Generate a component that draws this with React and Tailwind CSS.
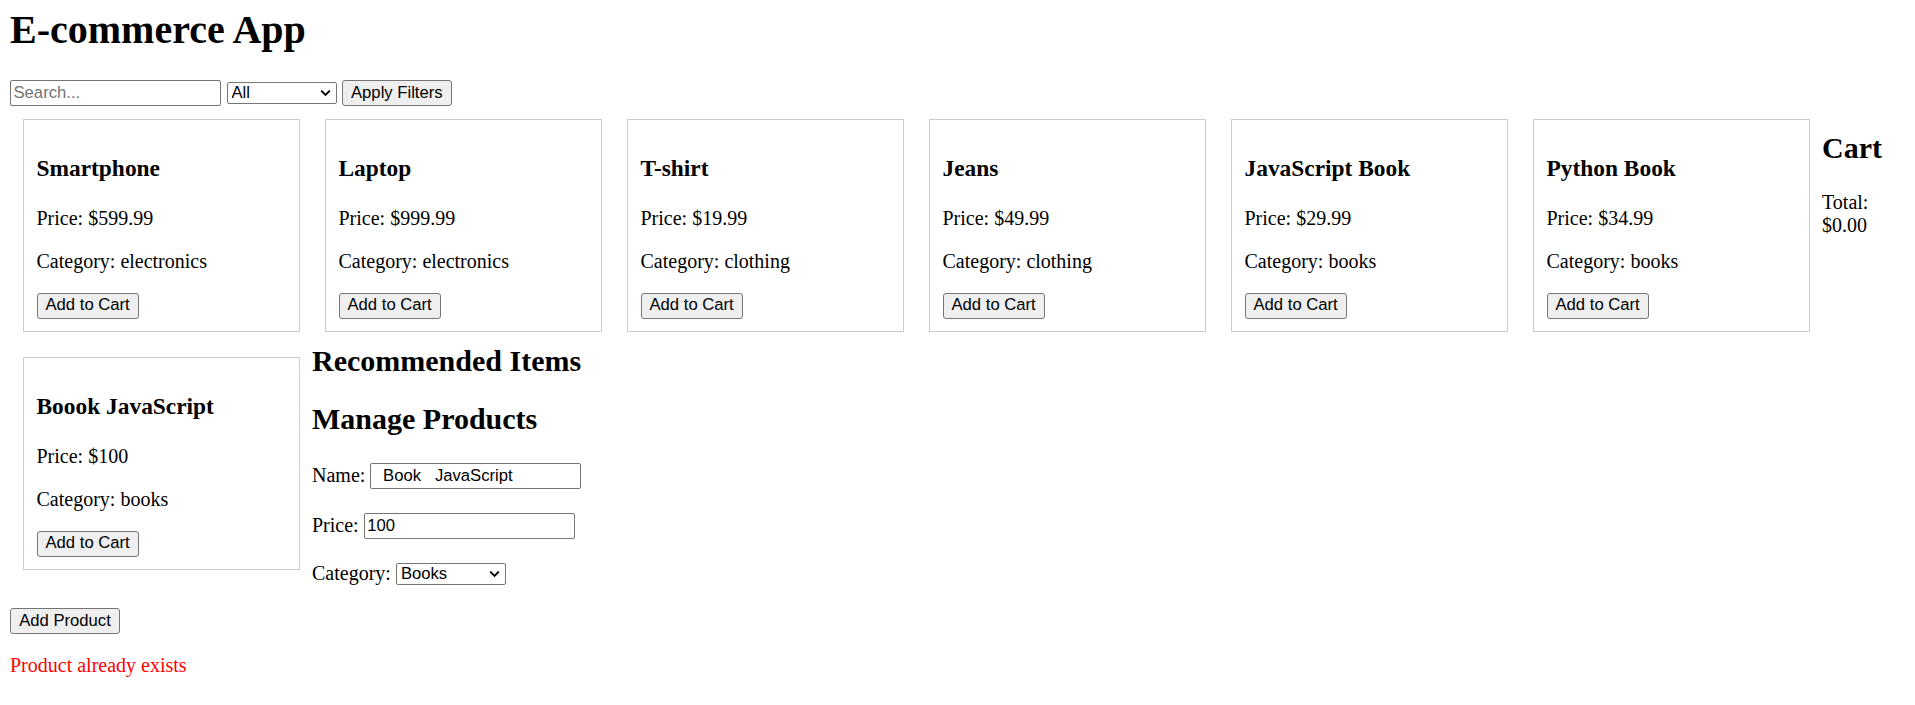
import React, { useState } from 'react';

// Product data shown in the grid
const products = [
  { id: 1, name: 'Smartphone', price: '599.99', category: 'electronics' },
  { id: 2, name: 'Laptop', price: '999.99', category: 'electronics' },
  { id: 3, name: 'T-shirt', price: '19.99', category: 'clothing' },
  { id: 4, name: 'Jeans', price: '49.99', category: 'clothing' },
  { id: 5, name: 'JavaScript Book', price: '29.99', category: 'books' },
  { id: 6, name: 'Python Book', price: '34.99', category: 'books' },
  { id: 7, name: 'Boook JavaScript', price: '100', category: 'books' }
];

const controlFont = "font-['Liberation_Sans',Arial,sans-serif] text-[16.67px] text-black";

const NativeButton = ({ children, className = '' }) => (
  <button
    className={`block h-[26px] px-[8px] border border-[#767676] rounded-[3px] bg-[#efefef] leading-none ${controlFont} ${className}`}
  >
    {children}
  </button>
);

const Chevron = () => (
  <svg
    className="absolute right-[6px] top-1/2 -translate-y-1/2 pointer-events-none"
    width="11"
    height="7"
    viewBox="0 0 11 7"
  >
    <path d="M1.2 1.2 5.5 5.5 9.8 1.2" fill="none" stroke="#000" strokeWidth="1.9" />
  </svg>
);

const SelectBox = ({ value, options }) => (
  <div className="relative shrink-0 w-[110px] h-[22px]">
    <select
      defaultValue={value}
      className={`block appearance-none w-full h-full py-0 pl-[4px] pr-[20px] border border-[#767676] rounded-[2px] bg-white leading-[20px] ${controlFont}`}
    >
      {options.map((o) => (
        <option key={o} value={o}>{o}</option>
      ))}
    </select>
    <Chevron />
  </div>
);

const TextInput = ({ placeholder, defaultValue }) => (
  <input
    type="text"
    placeholder={placeholder}
    defaultValue={defaultValue}
    className={`block w-[211px] h-[26px] px-[2.5px] border border-[#767676] rounded-[2px] bg-white placeholder:text-[#757575] ${controlFont}`}
  />
);

const ProductCard = ({ product }) => (
  <div className="box-border shrink-0 w-[277px] h-[213px] border border-[#cccccc] px-[12.5px] pt-[12.5px] ml-[13px] mr-[12px] mt-[13px] mb-[12px]">
    <h3 className="mt-[22.5px] mb-[24.5px] text-[23.4px] leading-[27px] font-bold">{product.name}</h3>
    <p className="my-[20px] leading-[23px]">Price: ${product.price}</p>
    <p className="my-[20px] leading-[23px]">Category: {product.category}</p>
    <NativeButton className="h-[25.4px]">Add to Cart</NativeButton>
  </div>
);

const App = () => {
  const [error] = useState('Product already exists');

  return (
    <div className="min-h-screen bg-white px-[10px] pt-[7px] text-black text-[20px] font-['Liberation_Serif','Times_New_Roman',serif]">
      <h1 className="text-[40px] leading-[46px] font-bold mb-[27px]">E-commerce App</h1>

      {/* Filters */}
      <div className="flex items-center gap-[5.5px] h-[26px]">
        <TextInput placeholder="Search..." />
        <SelectBox value="All" options={['All', 'Electronics', 'Clothing', 'Books']} />
        <NativeButton>Apply Filters</NativeButton>
      </div>

      {/* Products + cart */}
      <div className="flex items-start">
        {products.slice(0, 6).map((p) => (
          <ProductCard key={p.id} product={p} />
        ))}
        <div className="w-[83px] shrink-0">
          <h2 className="mt-[25px] text-[30px] leading-[34.5px] font-bold">Cart</h2>
          <p className="mt-[25px] leading-[23px]">Total: $0.00</p>
        </div>
      </div>

      <div className="flex items-start">
        <ProductCard product={products[6]} />
        <div className="shrink-0 pb-[16px]">
          <h2 className="text-[30px] leading-[33px] font-bold">Recommended Items</h2>
          <h2 className="mt-[25px] text-[30px] leading-[33px] font-bold">Manage Products</h2>

          <label className="flex items-center gap-[5px] h-[30px] mt-[25.5px] mb-[20px]">
            <span className="leading-[23px]">Name:</span>
            <TextInput defaultValue="  Book   JavaScript" />
          </label>
          <label className="flex items-center gap-[5px] h-[30px] mb-[18px]">
            <span className="leading-[23px]">Price:</span>
            <TextInput defaultValue="100" />
          </label>
          <label className="flex items-center gap-[5px] h-[30px] mb-[3.5px]">
            <span className="leading-[23px]">Category:</span>
            <SelectBox value="Books" options={['Electronics', 'Clothing', 'Books']} />
          </label>
        </div>
      </div>

      <NativeButton className="w-[110px]">Add Product</NativeButton>
      <p className="mt-[20px] leading-[23px] text-[#ff0000]">{error}</p>
    </div>
  );
};

export default App;
